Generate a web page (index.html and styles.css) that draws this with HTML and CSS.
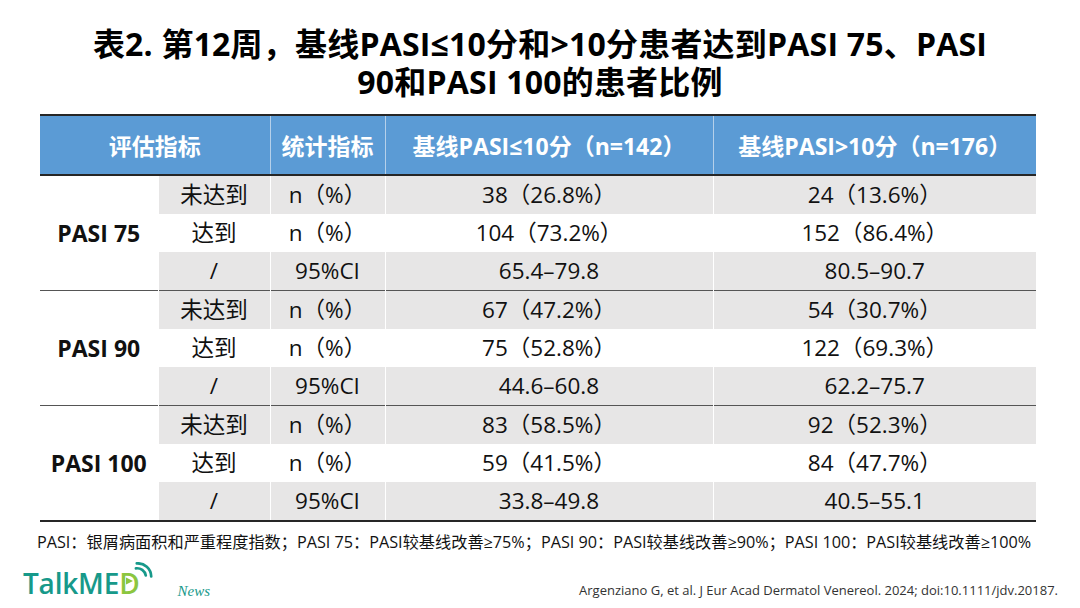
FILE: index.html
```html
<!DOCTYPE html>
<html lang="zh-CN">
<head>
<meta charset="utf-8">
<title>表2</title>
<link rel="stylesheet" href="styles.css">
</head>
<body>
<div class="page">
  <h1 class="title">表2. 第12周，基线PASI≤10分和&gt;10分患者达到PASI 75、PASI<br>90和PASI 100的患者比例</h1>

  <table class="data">
    <colgroup>
      <col class="c-group"><col class="c-sub"><col class="c-stat"><col class="c-a"><col class="c-b">
    </colgroup>
    <thead>
      <tr>
        <th colspan="2">评估指标</th>
        <th>统计指标</th>
        <th>基线PASI≤10分（n=142）</th>
        <th>基线PASI&gt;10分（n=176）</th>
      </tr>
    </thead>
    <tbody class="grp">
      <tr class="shade"><td class="glabel" rowspan="3">PASI 75</td><td>未达到</td><td>n（%）</td><td>38（26.8%）</td><td>24（13.6%）</td></tr>
      <tr><td>达到</td><td>n（%）</td><td>104（73.2%）</td><td>152（86.4%）</td></tr>
      <tr class="shade"><td>/</td><td>95%CI</td><td>65.4–79.8</td><td>80.5–90.7</td></tr>
    </tbody>
    <tbody class="grp">
      <tr class="shade"><td class="glabel" rowspan="3">PASI 90</td><td>未达到</td><td>n（%）</td><td>67（47.2%）</td><td>54（30.7%）</td></tr>
      <tr><td>达到</td><td>n（%）</td><td>75（52.8%）</td><td>122（69.3%）</td></tr>
      <tr class="shade"><td>/</td><td>95%CI</td><td>44.6–60.8</td><td>62.2–75.7</td></tr>
    </tbody>
    <tbody class="grp">
      <tr class="shade"><td class="glabel" rowspan="3">PASI 100</td><td>未达到</td><td>n（%）</td><td>83（58.5%）</td><td>92（52.3%）</td></tr>
      <tr><td>达到</td><td>n（%）</td><td>59（41.5%）</td><td>84（47.7%）</td></tr>
      <tr class="shade"><td>/</td><td>95%CI</td><td>33.8–49.8</td><td>40.5–55.1</td></tr>
    </tbody>
  </table>

  <p class="note">PASI：银屑病面积和严重程度指数；PASI 75：PASI较基线改善≥75%；PASI 90：PASI较基线改善≥90%；PASI 100：PASI较基线改善≥100%</p>

  <div class="footer">
    <div class="brand">
      <span class="logo">TalkME<span class="logo-d">D<svg class="play" viewBox="0 0 10 10"><polygon points="2,1.5 9,5 2,8.5" fill="#8cc63f"/></svg></span><svg class="waves" viewBox="0 0 24 20"><path d="M3 7 A10 10 0 0 1 14 15" fill="none" stroke="#17998a" stroke-width="3" stroke-linecap="round"/><path d="M4 1.5 A15 15 0 0 1 20 16" fill="none" stroke="#17998a" stroke-width="3" stroke-linecap="round"/></svg></span>
      <span class="news">News</span>
    </div>
    <p class="cite">Argenziano G, et al. J Eur Acad Dermatol Venereol. 2024; doi:10.1111/jdv.20187.</p>
  </div>
</div>
</body>
</html>
```

FILE: styles.css
```css
html, body {
  margin: 0;
  padding: 0;
  background: #ffffff;
}

.page {
  width: 1080px;
  height: 608px;
  display: flex;
  flex-direction: column;
  font-family: "Open Sans", "Noto Sans CJK SC", sans-serif;
  color: #111;
  overflow: hidden;
}

.title {
  margin: 0;
  padding-top: 25px;
  text-align: center;
  font-family: "Open Sans", "Noto Sans CJK SC", sans-serif;
  font-weight: 700;
  font-size: 32px;
  line-height: 38px;
  letter-spacing: 0.2px;
  color: #000;
}

.data {
  margin: 13px 0 0 40px;
  width: 996px;
  border-collapse: collapse;
  table-layout: fixed;
  border-top: 2px solid #262626;
  border-bottom: 2px solid #262626;
}

.c-group { width: 118px; }
.c-sub { width: 112px; }
.c-stat { width: 115px; }
.c-a { width: 328px; }
.c-b { width: 323px; }

.data th {
  height: 58px;
  padding: 0;
  background: #5b9bd5;
  color: #fff;
  font-family: "Open Sans", "Noto Sans CJK SC", sans-serif;
  font-weight: 700;
  font-size: 23px;
  text-align: center;
  border-left: 1px solid #b5d0ea;
  border-bottom: 2px solid #262626;
}

.data th:first-child { border-left: none; }

.data td {
  height: 38px;
  padding: 0;
  text-align: center;
  font-size: 22.5px;
  line-height: 26px;
  border-left: 1px solid #ffffff;
  color: #111;
}

.data tr.shade td { background: #e7e6e6; }

.data td.glabel,
.data tr.shade td.glabel {
  background: #ffffff;
  font-weight: 700;
  font-size: 23px;
  border-left: none;
}

.grp + .grp tr:first-child td {
  border-top: 1px solid #555555;
}

.note {
  margin: 9px 0 0 37px;
  font-size: 16.2px;
  line-height: 22px;
  color: #111;
  white-space: nowrap;
}

.footer {
  display: flex;
  justify-content: space-between;
  align-items: flex-end;
  margin-top: 14px;
  padding: 0 22px 0 23px;
}

.brand {
  display: flex;
  align-items: flex-end;
  gap: 22px;
}

.logo {
  position: relative;
  font-family: "Open Sans", sans-serif;
  font-size: 28px;
  font-weight: 600;
  color: #17998a;
  letter-spacing: -0.2px;
  line-height: 32px;
  padding-right: 16px;
}

.logo-d {
  position: relative;
  color: #8cc63f;
}

.play {
  position: absolute;
  left: 5px;
  top: 12px;
  width: 10px;
  height: 10px;
}

.waves {
  position: absolute;
  right: 0;
  top: -5px;
  width: 22px;
  height: 18px;
}

.news {
  font-family: "Liberation Serif", serif;
  font-style: italic;
  font-size: 15px;
  color: #17998a;
  line-height: 22px;
  margin-bottom: -3px;
}

.cite {
  margin: 0 0 0 0;
  font-size: 13px;
  line-height: 18px;
  color: #333;
}
```
